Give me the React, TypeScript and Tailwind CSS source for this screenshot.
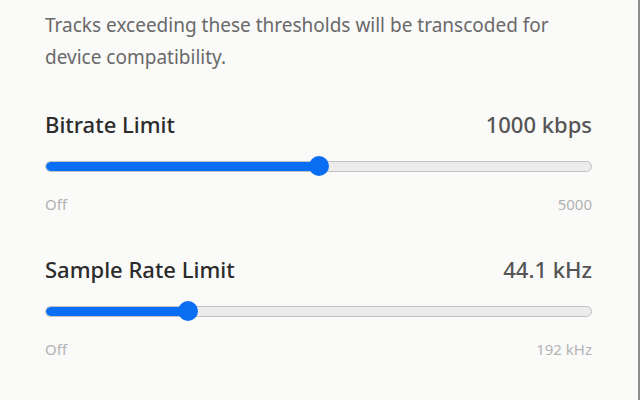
import React from 'react';

type LimitProps = {
    title: string;
    value: string;
    percent: number;
    minLabel: string;
    maxLabel: string;
};

const LimitSlider: React.FC<LimitProps> = ({ title, value, percent, minLabel, maxLabel }) => {
    return (
        <div>
            <div className="flex items-center justify-between h-[28px]">
                <h3 className="text-[22px] font-medium text-[#2b2b2b]">{title}</h3>
                <span className="text-[22px] font-medium text-[#555555]">{value}</span>
            </div>
            <div className="relative mt-[18px] h-5 flex items-center">
                <div className="w-full h-[11px] rounded-full bg-[#ececec] border border-[#c2c2c2] overflow-hidden">
                    <div className="h-full bg-[#0a6ef2] rounded-full" style={{ width: `${percent}%` }} />
                </div>
                <div
                    className="absolute top-0 w-5 h-5 -ml-[10px] rounded-full bg-[#0a6ef2]"
                    style={{ left: `${percent}%` }}
                />
            </div>
            <div className="mt-[18px] flex justify-between text-[15px] leading-[20px] text-[#b3b3b3]">
                <span>{minLabel}</span>
                <span>{maxLabel}</span>
            </div>
        </div>
    );
};

export default function App() {
    return (
        <div
            className="w-[640px] h-[400px] overflow-hidden bg-[#fafaf9] border-r-2 border-[#8c8c8c]"
            style={{ fontFamily: '"Noto Sans", Roboto, sans-serif' }}
        >
            <div className="pl-[45px] pr-[46px] pt-[9px]">
                <p className="text-[19px] leading-[32px] text-[#696969]">
                    Tracks exceeding these thresholds will be transcoded for device compatibility.
                </p>
                <div className="mt-[37px] flex flex-col gap-[41px]">
                    <LimitSlider title="Bitrate Limit" value="1000 kbps" percent={50} minLabel="Off" maxLabel="5000" />
                    <LimitSlider title="Sample Rate Limit" value="44.1 kHz" percent={26.2} minLabel="Off" maxLabel="192 kHz" />
                </div>
            </div>
        </div>
    );
}
